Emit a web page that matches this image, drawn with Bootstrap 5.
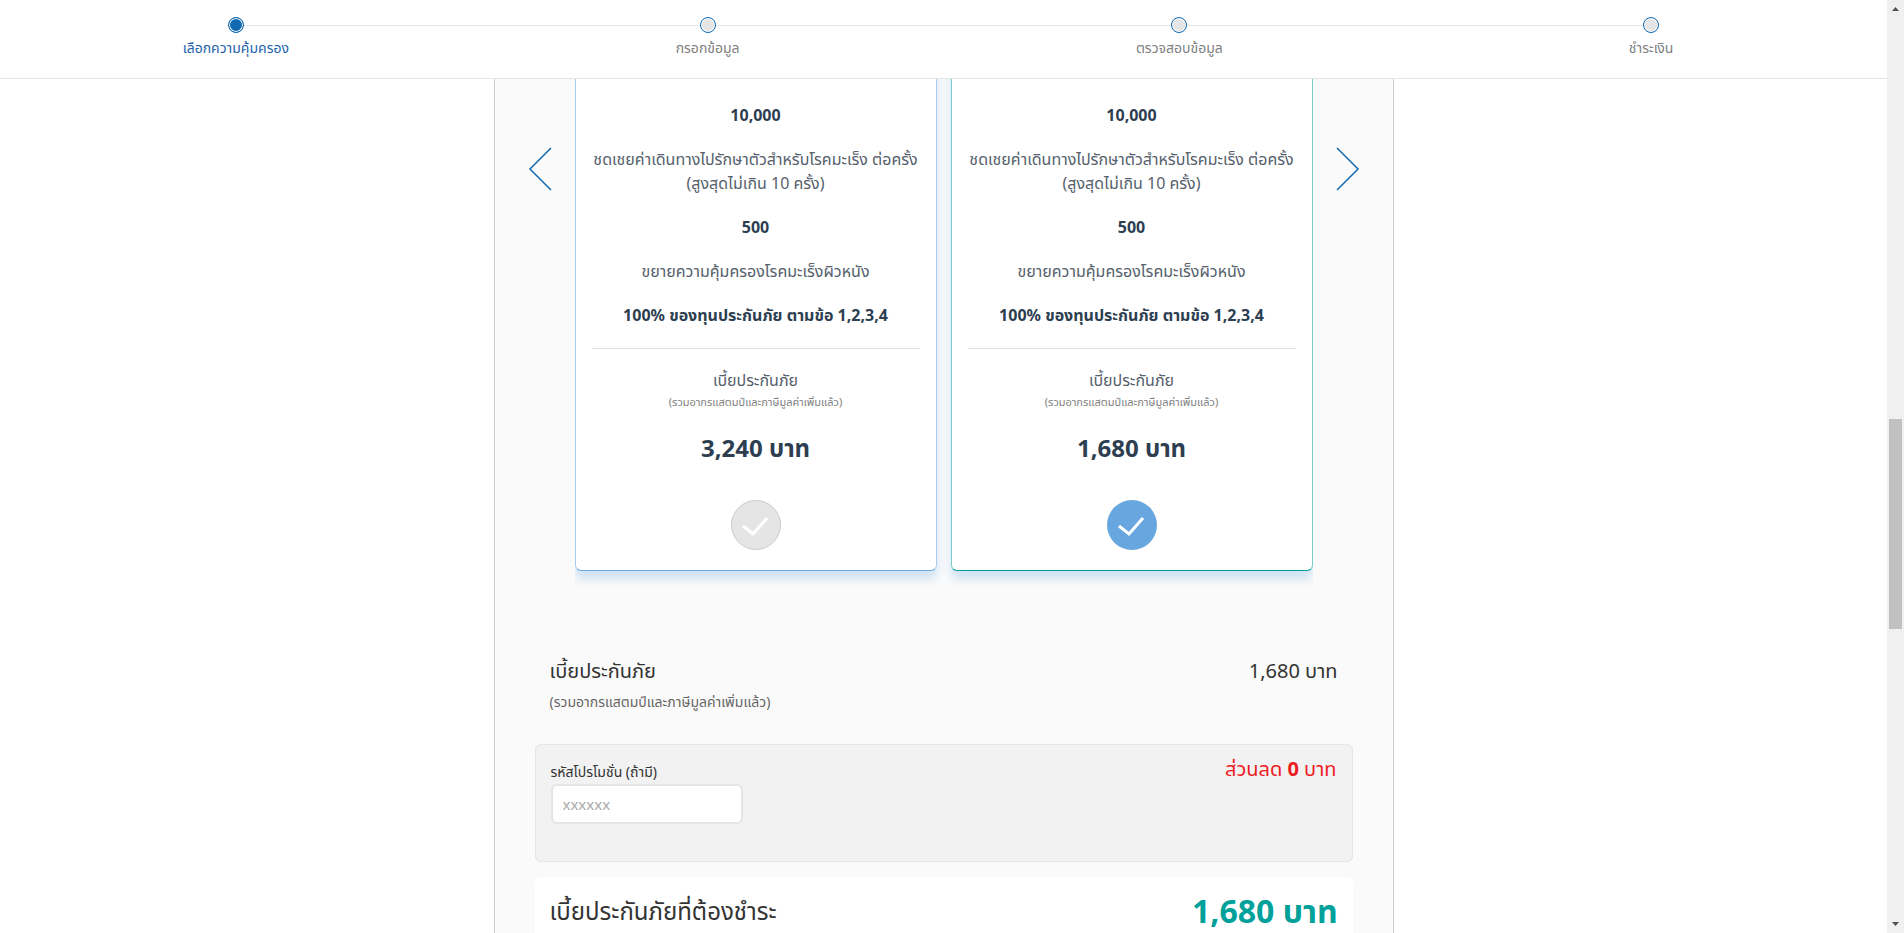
<!DOCTYPE html>
<html lang="th">
<head>
<meta charset="utf-8">
<meta name="viewport" content="width=device-width, initial-scale=1">
<title>เลือกความคุ้มครอง</title>
<link href="https://cdn.jsdelivr.net/npm/bootstrap@5.3.0/dist/css/bootstrap.min.css" rel="stylesheet">
<style>
  body { font-family: "Noto Sans", "Noto Sans Thai", "Noto Sans Thai UI", sans-serif; color: #333; background: #fff; }
  .steps-bar { height: 79px; border-bottom: 1px solid #e5e5e5; padding-top: 17px; }
  .step { font-size: 14px; line-height: 20px; color: #808080; position: relative; }
  .step + .step::before { content: ""; position: absolute; top: 8px; left: calc(-50% + 8px); width: calc(100% - 16px); height: 1px; background: #e5e5e5; }
  .step-dot { width: 16px; height: 16px; border: 1px solid #116ab1; border-radius: 50%; background: #e5e5e5; box-shadow: inset 0 0 0 1px #fff; margin-bottom: 5px; }
  .step.active { color: #1d63ac; }
  .step.active .step-dot { background: #116ab1; }
  .panel { max-width: 900px; background: #fafafa; border: solid #ccc; border-width: 0 1px; padding: 0 33px; }
  .arrow-btn { width: 47px; height: 44px; padding: 0; border: 0; background: none; margin-top: 68px; }
  .slides { padding-bottom: 20px; gap: 14px; }
  .plan { border: 1px solid #a6cdf0; border-bottom-color: #67a8dc; border-radius: 6px; background: #fff; margin-top: -20px; padding: 43px 16px 20px; color: #56616c; font-size: 16px; line-height: 24px; box-shadow: 0 8px 10px #cfe2f4; }
  .plan.chosen { border-color: #7accc8; border-bottom-color: #00a19a; }
  .plan dd { color: #2c3e50; font-weight: 700; margin: 0 0 20px; }
  .plan dt { font-weight: 400; margin-bottom: 20px; }
  .plan hr { margin: 21px 0 19px; border-color: #ccc; opacity: .6; }
  .fine { font-size: 11px; line-height: 20px; color: #808080; }
  .price { font-size: 24px; line-height: 32px; font-weight: 700; color: #2c3e50; margin: 20px 0 36px; }
  .pick { border: 0; padding: 0; background: none; width: 50px; height: 50px; }
  .summary { padding: 65px 15px 27px; margin: 0 7px; }
  .summary-title, .amount { font-size: 20px; line-height: 30px; }
  .note { font-size: 14px; line-height: 31px; color: #666; }
  .promo { background: #f2f2f2; border: 1px solid #e5e5e5; border-radius: 6px; margin: 0 7px; padding: 9px 15px 37px; }
  .promo label { font-size: 14px; line-height: 24px; margin-top: 6px; }
  .promo input { width: 192px; height: 40px; border: 2px solid #e5e5e5; border-radius: 6px; font-size: 15px; padding: 0 10px; }
  .promo input::placeholder { color: #aaa; opacity: 1; }
  .discount { color: #ed1c24; }
  .total { background: #fff; border-radius: 6px; margin: 15px 7px 0; padding: 14px 15px 40px; }
  .total-title { font-size: 24px; line-height: 40px; }
  .total-sum { font-size: 32px; line-height: 40px; font-weight: 700; color: #00a19a; }
  .sbar { width: 17px; background: #f0f0f0; }
  .sbar-thumb { background: #c1c1c1; width: 13px; }
</style>
</head>
<body class="vh-100 overflow-hidden d-flex">
<div class="flex-grow-1 overflow-hidden">
  <nav class="steps-bar row g-0 text-center" aria-label="ขั้นตอน">
    <div class="step active col"><div class="step-dot mx-auto"></div>เลือกความคุ้มครอง</div>
    <div class="step col"><div class="step-dot mx-auto"></div>กรอกข้อมูล</div>
    <div class="step col"><div class="step-dot mx-auto"></div>ตรวจสอบข้อมูล</div>
    <div class="step col"><div class="step-dot mx-auto"></div>ชำระเงิน</div>
  </nav>
  <main class="panel mx-auto">
    <section class="d-flex align-items-start">
      <button class="arrow-btn flex-shrink-0 text-start" aria-label="ก่อนหน้า"><svg class="d-block" width="24" height="44" fill="none" stroke="#116ab1" stroke-width="1.5"><path d="M23 1 2 22l21 21"/></svg></button>
      <div class="slides d-flex flex-fill overflow-hidden text-center">
        <article class="plan flex-fill">
          <dl class="mb-0">
            <dd>10,000</dd>
            <dt>ชดเชยค่าเดินทางไปรักษาตัวสำหรับโรคมะเร็ง ต่อครั้ง<br>(สูงสุดไม่เกิน 10 ครั้ง)</dt>
            <dd>500</dd>
            <dt>ขยายความคุ้มครองโรคมะเร็งผิวหนัง</dt>
            <dd>100% ของทุนประกันภัย ตามข้อ 1,2,3,4</dd>
          </dl>
          <hr>
          <div>เบี้ยประกันภัย</div>
          <div class="fine">(รวมอากรแสตมป์และภาษีมูลค่าเพิ่มแล้ว)</div>
          <div class="price">3,240 บาท</div>
          <button class="pick d-block mx-auto" aria-label="เลือกแผน 3,240 บาท"><svg class="d-block" width="50" height="50"><circle cx="25" cy="25" r="24.5" fill="#e5e5e5" stroke="#ccc"/><path d="m12 26 10 8 14-16" fill="none" stroke="#fff" stroke-width="3"/></svg></button>
        </article>
        <article class="plan chosen flex-fill">
          <dl class="mb-0">
            <dd>10,000</dd>
            <dt>ชดเชยค่าเดินทางไปรักษาตัวสำหรับโรคมะเร็ง ต่อครั้ง<br>(สูงสุดไม่เกิน 10 ครั้ง)</dt>
            <dd>500</dd>
            <dt>ขยายความคุ้มครองโรคมะเร็งผิวหนัง</dt>
            <dd>100% ของทุนประกันภัย ตามข้อ 1,2,3,4</dd>
          </dl>
          <hr>
          <div>เบี้ยประกันภัย</div>
          <div class="fine">(รวมอากรแสตมป์และภาษีมูลค่าเพิ่มแล้ว)</div>
          <div class="price">1,680 บาท</div>
          <button class="pick d-block mx-auto" aria-label="เลือกแผน 1,680 บาท"><svg class="d-block" width="50" height="50"><circle cx="25" cy="25" r="25" fill="#67a6df"/><path d="m12 26 10 8 14-16" fill="none" stroke="#fff" stroke-width="3"/></svg></button>
        </article>
      </div>
      <button class="arrow-btn flex-shrink-0" aria-label="ถัดไป"><svg class="d-block ms-auto" width="24" height="44" fill="none" stroke="#116ab1" stroke-width="1.5"><path d="m1 1 21 21L1 43"/></svg></button>
    </section>
    <section class="summary">
      <div class="d-flex justify-content-between"><span class="summary-title">เบี้ยประกันภัย</span><span class="amount">1,680 บาท</span></div>
      <div class="note">(รวมอากรแสตมป์และภาษีมูลค่าเพิ่มแล้ว)</div>
    </section>
    <section class="promo d-flex justify-content-between">
      <div><label class="d-block" for="promo">รหัสโปรโมชั่น (ถ้ามี)</label><input class="d-block" id="promo" type="text" placeholder="xxxxxx"></div>
      <div class="amount discount">ส่วนลด <strong>0</strong> บาท</div>
    </section>
    <section class="total d-flex justify-content-between">
      <span class="total-title">เบี้ยประกันภัยที่ต้องชำระ</span><span class="total-sum">1,680 บาท</span>
    </section>
  </main>
</div>
<div class="sbar flex-shrink-0 d-flex flex-column align-items-center" aria-hidden="true">
  <svg width="17" height="17" fill="#505050"><path d="M5 11h7L8.500 7z"/></svg>
  <div class="flex-fill w-100 d-flex flex-column align-items-center"><div style="flex:402"></div><div class="sbar-thumb" style="flex:210"></div><div style="flex:287"></div></div>
  <svg width="17" height="17" fill="#505050"><path d="M5 6h7l-3.500 4z"/></svg>
</div>
<script src="https://cdn.jsdelivr.net/npm/bootstrap@5.3.0/dist/js/bootstrap.bundle.min.js"></script>
</body>
</html>
